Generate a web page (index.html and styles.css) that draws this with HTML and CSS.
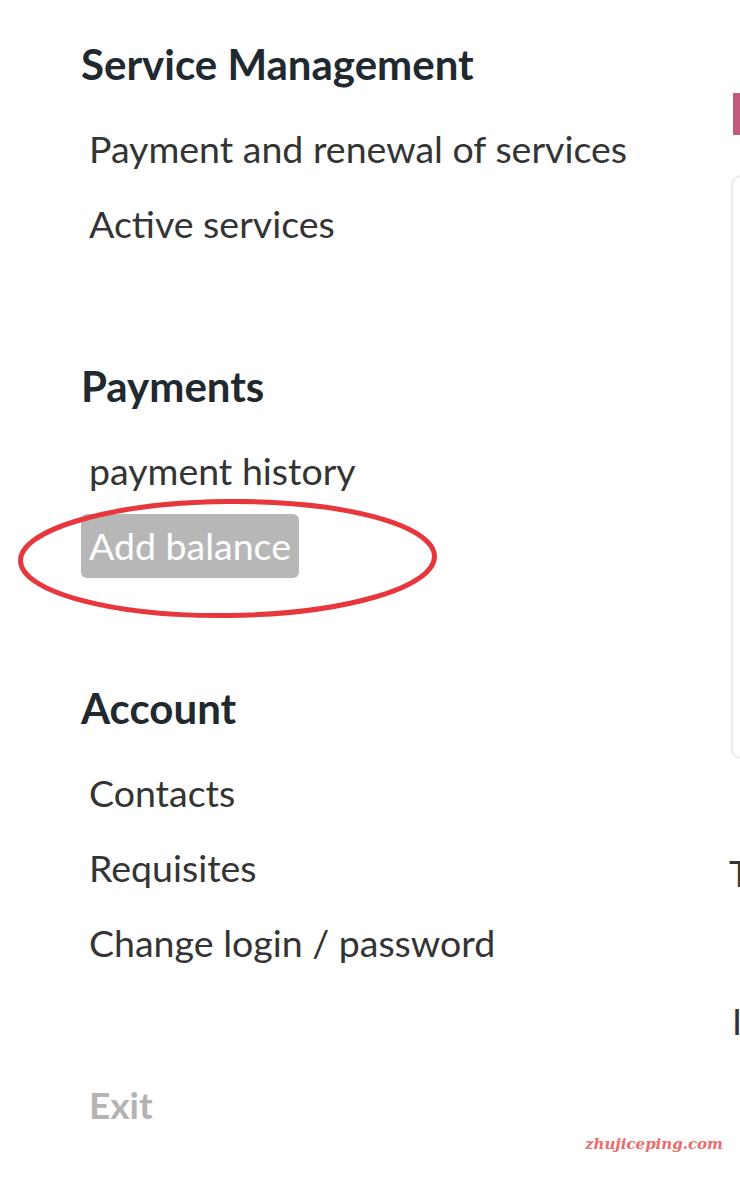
FILE: index.html
```html
<!DOCTYPE html>
<html lang="en">
   <head>
      <meta charset="UTF-8" />
      <meta name="viewport" content="width=device-width, initial-scale=1.0"/>
      <title>Account menu</title>
      <link rel="stylesheet" href="styles.css">
   </head>
   <body>
      <!-- Menu on the left -->
      <div class="sidebar">
         <div class="menu-group">
            <h2>Service Management</h2>
            <a class="menu-item" href="#">Payment and renewal of services</a>
            <a class="menu-item" href="#">Active services</a>
         </div>
         <div class="menu-group">
            <h2>Payments</h2>
            <a class="menu-item" href="#">payment history</a>
            <div class="marked">
               <a class="menu-item active" href="#">Add balance</a>
               <svg class="ring" width="420" height="120" viewBox="0 0 420 120">
                  <ellipse cx="209.5" cy="59.5" rx="207" ry="57" fill="none" stroke="#e8373c" stroke-width="5" transform="rotate(-0.6 209.5 59.5)"/>
               </svg>
            </div>
         </div>
         <div class="menu-group">
            <h2>Account</h2>
            <a class="menu-item" href="#">Contacts</a>
            <a class="menu-item" href="#">Requisites</a>
            <a class="menu-item" href="#">Change login / password</a>
         </div>
         <a class="exit" href="#">Exit</a>
      </div>
      <!-- Main area, cut off by the window -->
      <div class="main">
         <div class="tab-mark"></div>
         <div class="card"></div>
         <div class="line">T</div>
         <div class="line second">I</div>
      </div>
      <div class="watermark">zhujiceping.com</div>
   </body>
</html>
```

FILE: styles.css
```css
body {
margin: 0;
font-family: Lato, "Open Sans", sans-serif;
background: #fff;
color: #343434;
display: flex;
height: 1180px;
overflow: hidden;
position: relative;
}
.sidebar {
width: 731px;
flex-shrink: 0;
padding: 40px 0 0 81px;
box-sizing: border-box;
display: flex;
flex-direction: column;
align-items: flex-start;
}
.menu-group {
display: flex;
flex-direction: column;
align-items: flex-start;
margin-bottom: 95px;
}
h2 {
margin: 0 0 29px;
font-size: 42px;
font-weight: 700;
color: #212930;
line-height: 48px;
}
.menu-item {
display: block;
padding: 8px 8px;
margin-bottom: 11px;
font-size: 37.5px;
line-height: 48px;
color: #343434;
text-decoration: none;
border-radius: 6px;
}
.menu-item.active {
background: #b7b7b7;
color: #fff;
}
.marked {
position: relative;
}
.ring {
position: absolute;
left: -63px;
top: -15px;
}
.exit {
padding-left: 8px;
font-size: 37px;
line-height: 48px;
font-weight: 700;
color: #b3b3b3;
text-decoration: none;
}
.main {
flex: 1;
padding-top: 93px;
font-size: 36px;
color: #343434;
}
.tab-mark {
margin-left: 2px;
width: 8px;
height: 42px;
background: #c25b7b;
}
.card {
margin-top: 40px;
height: 580px;
border: 2px solid #ebebeb;
border-right: none;
border-radius: 10px 0 0 10px;
}
.line {
margin-top: 90px;
margin-left: -2px;
line-height: 48px;
}
.line.second {
margin-top: 100px;
margin-left: 1px;
}
.watermark {
position: absolute;
left: 585px;
top: 1135px;
font-family: "DejaVu Serif", serif;
font-style: italic;
font-weight: bold;
font-size: 15px;
color: #ec6b6b;
}
```
